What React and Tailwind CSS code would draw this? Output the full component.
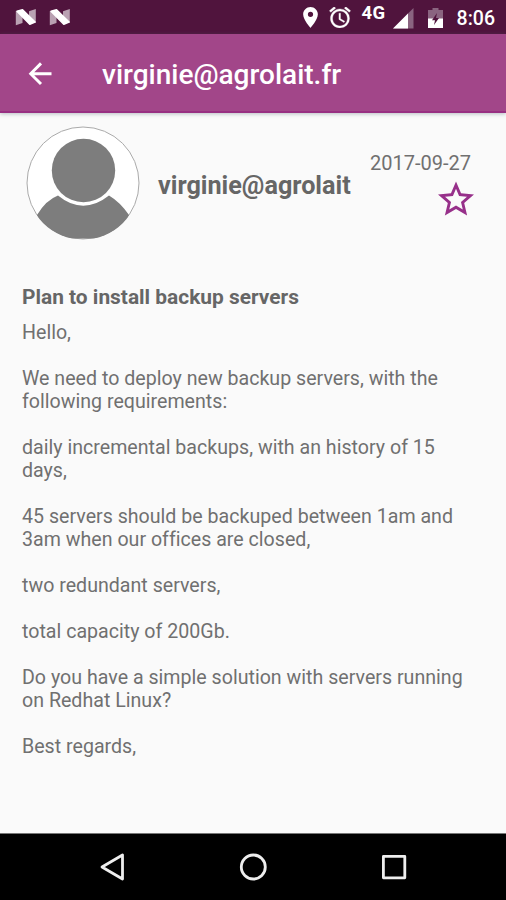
const paragraphs = [
  ['Hello,'],
  ['We need to deploy new backup servers, with the', 'following requirements:'],
  ['daily incremental backups, with an history of 15', 'days,'],
  ['45 servers should be backuped between 1am and', '3am when our offices are closed,'],
  ['two redundant servers,'],
  ['total capacity of 200Gb.'],
  ['Do you have a simple solution with servers running', 'on Redhat Linux?'],
  ['Best regards,'],
];

function NougatIcon() {
  return (
    <svg className="w-[22px] h-[18px]" viewBox="0 0 22 18">
      <path d="M0.8 3L7.5 5V15L0.8 17.2z" fill="#b9a1b2" />
      <path d="M14 3.2L20.8 1V15L14 13z" fill="#b9a1b2" />
      <path d="M2 3.2L7.5 1.8L20 14L14.8 16.2z" fill="#fff" stroke="#fff" strokeWidth="1.6" strokeLinejoin="round" />
    </svg>
  );
}

function StatusBar() {
  return (
    <div className="h-[34px] shrink-0 flex items-start justify-between bg-[#50143d] text-white">
      <div className="flex gap-3 pl-[15px] pt-2">
        <NougatIcon />
        <NougatIcon />
      </div>
      <div className="flex items-start pr-[11px]">
        <svg className="mt-[7px] w-[15px] h-[21px]" viewBox="5 2 14 20" fill="#fff">
          <path d="M12 2C8.13 2 5 5.13 5 9c0 5.25 7 13 7 13s7-7.75 7-13c0-3.87-3.13-7-7-7zm0 9.5a2.5 2.5 0 0 1 0-5 2.5 2.5 0 0 1 0 5z" />
        </svg>
        <svg className="ml-[11px] mt-[7px] w-[22px] h-[21px]" viewBox="1.9 2.2 20.2 19.8" fill="#fff" stroke="#fff" strokeWidth="0.3">
          <path d="M22 5.72l-4.6-3.86-1.29 1.53 4.6 3.86L22 5.72zM7.88 3.39L6.6 1.86 2 5.71l1.29 1.53 4.59-3.85zM12.5 8H11v6l4.75 2.85.75-1.23-4-2.37V8zM12 4c-4.97 0-9 4.03-9 9s4.02 9 9 9a9 9 0 0 0 0-18zm0 16c-3.87 0-7-3.13-7-7s3.13-7 7-7 7 3.13 7 7-3.13 7-7 7z" />
        </svg>
        <span className="ml-[11px] mt-[4px] w-[26px] text-[18.5px] leading-[18px] tracking-[0.4px] font-bold">4G</span>
        <svg className="ml-[5px] mt-[8px] w-[21px] h-[21px]" viewBox="0 0 21 21">
          <path d="M0 20.5L20.5 0V20.5z" fill="#8a6480" />
          <path d="M0 20.5L15 5.5V20.5z" fill="#fff" />
        </svg>
        <svg className="ml-[14px] mt-[8px] w-[15px] h-[20px]" viewBox="0 0 15 20">
          <path d="M4.5 0h6v2H15v9H0V2h4.5z" fill="#8a6480" />
          <path d="M0 10.5h15v9.5h-15z" fill="#fff" />
          <path d="M9 5L4 12.2h3L6 17l5-7H8z" fill="#50143d" />
        </svg>
        <span className="ml-[14px] mt-[8px] text-[19.5px] leading-[22px] font-medium">8:06</span>
      </div>
    </div>
  );
}

function AppBar() {
  return (
    <header className="relative z-10 h-[79px] shrink-0 flex items-center bg-[#a24689] border-b-2 border-[#982f82] text-white shadow-[0_1px_4px_rgba(80,100,110,0.4)]">
      <svg className="ml-[28px] mt-[2px] w-6 h-6" viewBox="0 0 24 24" fill="none" stroke="#fff" strokeWidth="2.9">
        <path d="M23.5 11.7H3M13 1.4L2.7 11.7L13 22" />
      </svg>
      <h1 className="ml-[50px] mt-[5px] text-[28px] leading-[32px] font-medium whitespace-nowrap">virginie@agrolait.fr</h1>
    </header>
  );
}

function Avatar() {
  return (
    <svg className="w-[114px] h-[114px] shrink-0" viewBox="0 0 114 114">
      <defs>
        <clipPath id="avatar">
          <circle cx="57" cy="57" r="56.5" />
        </clipPath>
      </defs>
      <circle cx="57" cy="57" r="56" fill="#fff" stroke="#aaa" />
      <g clipPath="url(#avatar)">
        <path d="M11 89Q20 74 32 69.5Q57 90 83 69.5Q94 76 103 89L96 112.4H18z" fill="#7d7d7d" />
        <circle cx="57.5" cy="44.5" r="31.7" fill="#7d7d7d" />
      </g>
    </svg>
  );
}

function NavigationBar() {
  return (
    <nav className="h-[67px] shrink-0 flex items-center justify-center bg-black border-t border-[#777]">
      <div className="flex items-center gap-[113px]">
        <svg className="w-[28px] h-[28px]" viewBox="0 0 28 28" fill="none" stroke="#eee" strokeWidth="2.8" strokeLinejoin="round">
          <path d="M24.5 2V26L4 14z" />
        </svg>
        <svg className="w-[28px] h-[28px]" viewBox="0 0 28 28" fill="none" stroke="#eee" strokeWidth="2.8">
          <circle cx="14.3" cy="14" r="12" />
        </svg>
        <svg className="w-[28px] h-[28px]" viewBox="0 0 28 28" fill="none" stroke="#eee" strokeWidth="2.8" strokeLinejoin="round">
          <path d="M3.4 3.4h21.4v21.4H3.4z" />
        </svg>
      </div>
    </nav>
  );
}

export default function App() {
  return (
    <div className="w-[506px] h-[900px] flex flex-col overflow-hidden bg-[#fafafa] font-[Roboto,sans-serif] text-[#666]">
      <StatusBar />
      <AppBar />
      <main className="flex-1 min-h-0">
        <section className="flex items-start pl-[26px] pr-[35px] pt-[13px]">
          <Avatar />
          <h2 className="ml-[18px] mt-[45px] text-[25.2px] leading-[30px] font-bold whitespace-nowrap">virginie@agrolait</h2>
          <div className="ml-auto flex flex-col items-end">
            <time className="mt-[26px] text-[20px] leading-[23px] text-[#707070] whitespace-nowrap">2017-09-27</time>
            <svg className="mt-[6px] -mr-[3px] w-9 h-[35px]" viewBox="2 2 20 19" fill="#97308a">
              <path d="M22 9.24l-7.19-.62L12 2 9.19 8.63 2 9.24l5.46 4.73L5.82 21 12 17.27 18.18 21l-1.63-7.03L22 9.24zM12 15.4l-3.76 2.27 1-4.28-3.32-2.88 4.38-.38L12 6.1l1.71 4.04 4.38.38-3.32 2.88 1 4.28L12 15.4z" />
            </svg>
          </div>
        </section>
        <article className="mt-[45px] px-[22px]">
          <h3 className="text-[20.9px] leading-[24px] font-bold">Plan to install backup servers</h3>
          <div className="mt-[12px] flex flex-col gap-[23px] text-[19.6px] leading-[23px] tracking-[0.01px] text-[#707070]">
            {paragraphs.map((lines) => (
              <p key={lines[0]}>
                {lines.map((line) => (
                  <span key={line} className="block whitespace-nowrap">{line}</span>
                ))}
              </p>
            ))}
          </div>
        </article>
      </main>
      <NavigationBar />
    </div>
  );
}
